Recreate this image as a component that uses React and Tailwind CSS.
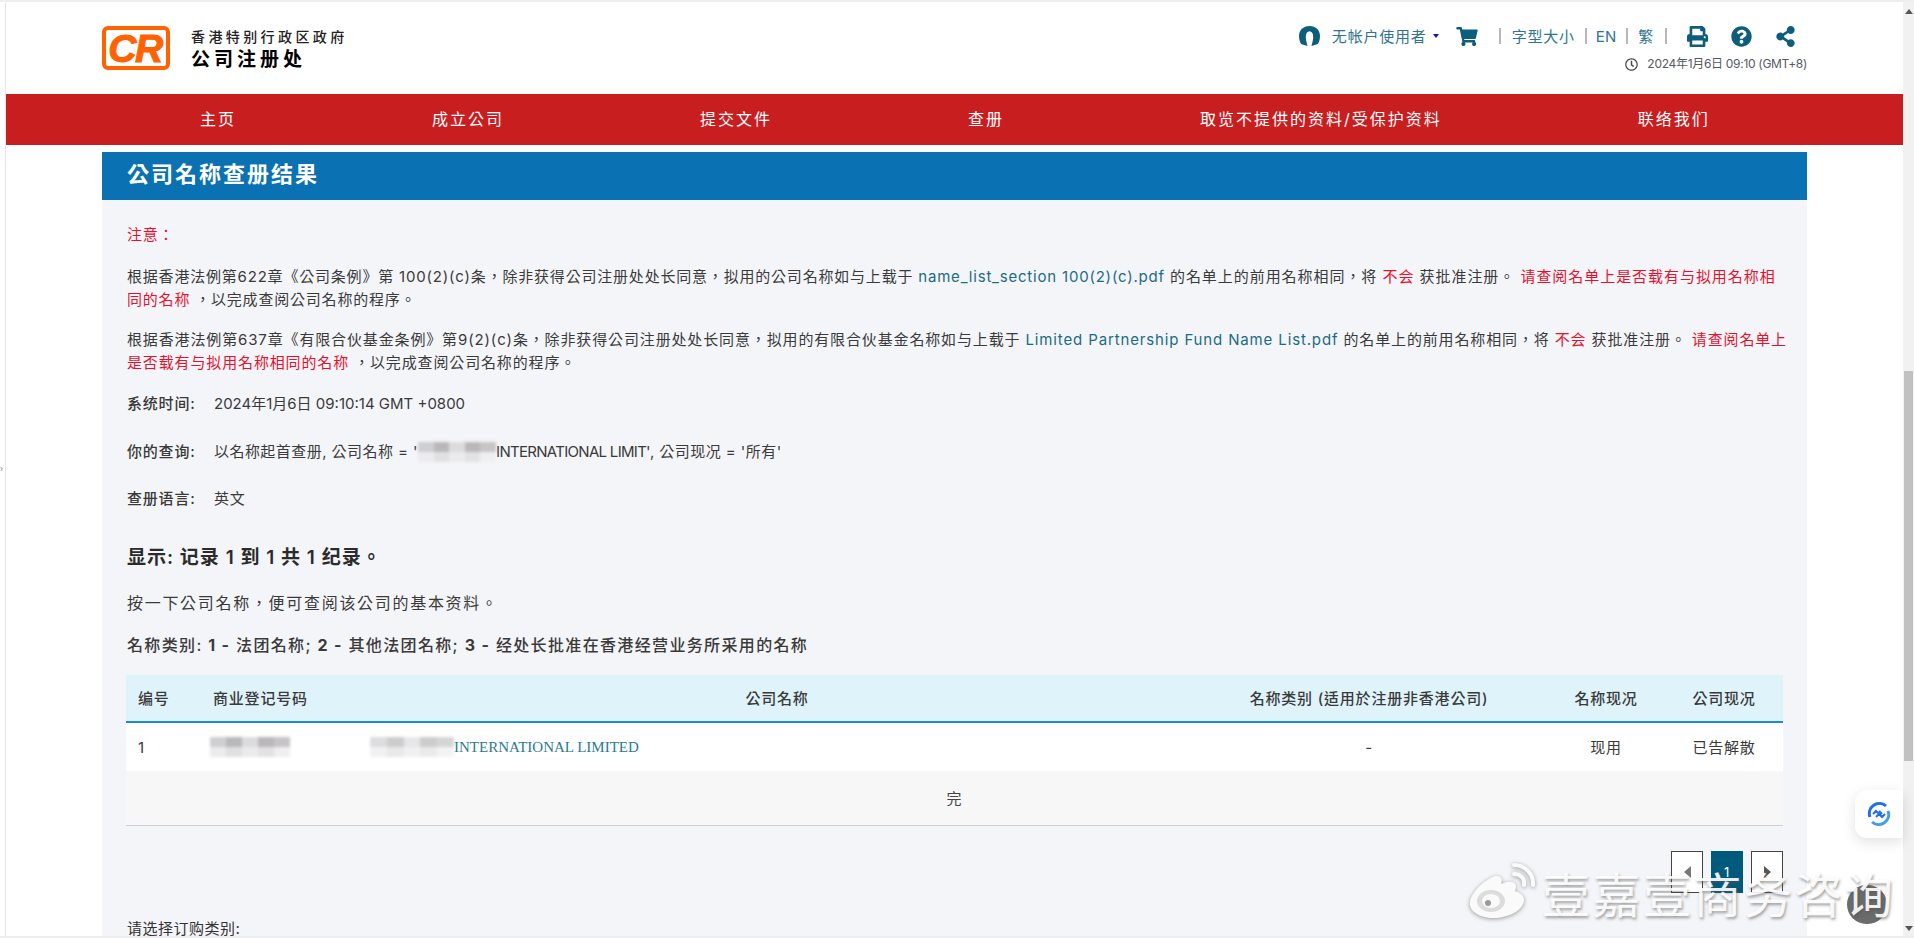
import { FaShoppingCart, FaPrint, FaQuestionCircle, FaShareAlt, FaRegClock } from "react-icons/fa";

const navItems = ["主页", "成立公司", "提交文件", "查册", "取览不提供的资料/受保护资料", "联络我们"];

function Sep({ className }) {
  return <span className={"block shrink-0 w-[2px] h-[16px] bg-[#b5b9bd] " + className} />;
}

function Mosaic({ className }) {
  return (
    <span className={"inline-flex flex-col shrink-0 overflow-hidden blur-[1.5px] " + className}>
      <span className="flex h-1/2">
        <span className="flex-1 bg-[#cfcfd1]" />
        <span className="flex-1 bg-[#b9b7b9]" />
        <span className="flex-1 bg-[#dcdcde]" />
        <span className="flex-1 bg-[#b9b7b9]" />
        <span className="flex-1 bg-[#c6c4c6]" />
      </span>
      <span className="flex h-1/2">
        <span className="flex-1 bg-[#ececee]" />
        <span className="flex-1 bg-[#e0e0e2]" />
        <span className="flex-1 bg-[#ebebed]" />
        <span className="flex-1 bg-[#e2e2e4]" />
        <span className="flex-1 bg-[#efeff0]" />
      </span>
    </span>
  );
}

function Weibo() {
  return (
    <svg viewBox="0 0 68 56" className="w-[68px] h-[56px] [filter:drop-shadow(0_1px_2px_rgba(90,90,90,0.6))]">
      <path d="M27 13c-9 3-22 14-25 25-2 9 8 17 23 17 16 0 31-8 31-18 0-6-6-8-9-9 2-5 1-8-3-9-4-1-8 1-11 2 1-3 1-6-1-7-1-1-3-1-5-1z" fill="#fafafa" />
      <ellipse cx="23" cy="38" rx="14" ry="11" fill="#dcdcdc" />
      <ellipse cx="23" cy="38" rx="9" ry="7" fill="#fafafa" />
      <circle cx="20" cy="40" r="3" fill="#9a9a9a" />
      <path d="M46 2c10 0 20 8 19 20" fill="none" stroke="#fafafa" strokeWidth="4" strokeLinecap="round" />
      <path d="M46 11c6 0 11 4 10 11" fill="none" stroke="#fafafa" strokeWidth="4" strokeLinecap="round" />
    </svg>
  );
}

export default function App() {
  return (
    <div className="relative w-[1914px] h-[938px] overflow-hidden bg-white flex font-['Inter','Noto_Sans_CJK_TC',sans-serif] text-[15px] leading-[23px] tracking-[0.8px] text-[#3a3a3a] border-t-2 border-b-2 border-[#eeeeee]">
      {/* left gutter */}
      <div className="w-[6px] shrink-0 border-r border-[#e6e6e6] flex items-center">
        <span className="text-[8px] leading-none text-[#777] mt-[-2px]">›</span>
      </div>

      <div className="w-[1897px] shrink-0 flex flex-col">
        {/* header */}
        <header className="h-[92px] shrink-0 px-[96px] flex justify-between">
          <div className="flex pt-[24px]">
            <div className="w-[68px] h-[44px] rounded-[6px] border-[4px] border-[#ff6200] flex items-center justify-center font-['Liberation_Sans',sans-serif] italic font-bold text-[39px] leading-none tracking-[-1.5px] text-[#ff6200] pr-[2px] [-webkit-text-stroke:1px_#ff6200]">
              CR
            </div>
            <div className="ml-[21px] mt-[1px] text-black font-medium font-['Noto_Sans_CJK_SC',sans-serif]">
              <div className="text-[14px] leading-[18px] tracking-[3.4px] text-[#222]">香港特别行政区政府</div>
              <div className="text-[19px] leading-[24px] tracking-[4px] mt-[1px] font-semibold">公司注册处</div>
            </div>
          </div>

          <div className="flex flex-col items-end pr-0 text-[#2f7590]">
            <div className="flex items-center h-[32px] mt-[18px] pr-[11px]">
              <svg viewBox="0 0 20 19" className="w-[21px] h-[20px] mr-[12px]">
                <path d="M10 0C4 0 0 4 0 9.500C0 13 1 15.500 2 17L8 19C8 17 6.500 15 6.500 10C6.500 7 8 5 10 5C12 5 13.500 7 13.500 10C13.500 15 12 17 12 19L18 17C19 15.500 20 13 20 9.500C20 4 16 0 10 0Z" fill="#0d5e7c" />
              </svg>
              <span>无帐户使用者</span>
              <span className="ml-[6px] w-0 h-0 border-x-[3px] border-x-transparent border-t-[4px] border-t-[#1414b8]" />
              <FaShoppingCart className="ml-[17px] w-[22px] h-[19px] text-[#0d5e7c]" />
              <Sep className="ml-[21px]" />
              <span className="ml-[11px]">字型大小</span>
              <Sep className="ml-[10px]" />
              <span className="ml-[9px] tracking-normal">EN</span>
              <Sep className="ml-[10px]" />
              <span className="ml-[10px]">繁</span>
              <Sep className="ml-[11px]" />
              <FaPrint className="ml-[20px] w-[21px] h-[21px] text-[#0d5e7c]" />
              <FaQuestionCircle className="ml-[23px] w-[21px] h-[21px] text-[#0d5e7c]" />
              <FaShareAlt className="ml-[23px] w-[21px] h-[21px] text-[#0d5e7c]" />
            </div>
            <div className="flex items-center text-[12px] leading-[18px] tracking-[-0.3px] text-[#555a60] mt-[3px]">
              <FaRegClock className="w-[13px] h-[13px] text-[#444] mr-[9px]" />
              2024年1月6日 09:10 (GMT+8)
            </div>
          </div>
        </header>

        {/* nav */}
        <nav className="h-[51px] shrink-0 bg-[#c81e20] px-[96px] flex items-center text-white text-[16px] tracking-[2px] whitespace-nowrap">
          {navItems.map((item) => (
            <span key={item} className="px-[98px]">{item}</span>
          ))}
        </nav>

        {/* content */}
        <main className="mx-[96px] mt-[7px] flex-1 min-h-0 flex flex-col">
          <h1 className="h-[48px] shrink-0 bg-[#0a72b2] pl-[25px] pb-[3px] flex items-center text-white text-[22px] font-semibold tracking-[2px]">
            公司名称查册结果
          </h1>
          <div className="flex-1 bg-[#f4f5f8] pt-[23px] px-[25px] whitespace-nowrap">
            <p className="text-[#e8112d] mb-[19px]">注意：</p>
            <p className="mb-[17px]">
              根据香港法例第622章《公司条例》第 100(2)(c)条，除非获得公司注册处处长同意，拟用的公司名称如与上载于{" "}
              <span className="text-[#1b6b86]">name_list_section 100(2)(c).pdf</span>{" "}
              <span className="tracking-[0.95px]">
                的名单上的前用名称相同，将 <span className="text-[#e8112d]">不会</span> 获批准注册。 <span className="text-[#e8112d]">请查阅名单上是否载有与拟用名称相</span>
              </span>
              <br />
              <span className="text-[#e8112d]">同的名称</span> ，以完成查阅公司名称的程序。
            </p>
            <p className="mb-[18px] tracking-[0.86px]">
              根据香港法例第637章《有限合伙基金条例》第9(2)(c)条，除非获得公司注册处处长同意，拟用的有限合伙基金名称如与上载于{" "}
              <span className="text-[#1b6b86]">Limited Partnership Fund Name List.pdf</span> 的名单上的前用名称相同，将{" "}
              <span className="text-[#e8112d]">不会</span> 获批准注册。 <span className="text-[#e8112d]">请查阅名单上</span>
              <br />
              <span className="text-[#e8112d]">是否载有与拟用名称相同的名称</span> ，以完成查阅公司名称的程序。
            </p>
            <div className="flex mb-[25px]">
              <span className="w-[87px] font-medium">系统时间:</span>
              <span className="tracking-normal">2024年1月6日 09:10:14 GMT +0800</span>
            </div>
            <div className="flex mb-[24px]">
              <span className="w-[87px] font-medium">你的查询:</span>
              <span className="flex items-center tracking-[0.45px]">
                以名称起首查册, 公司名称 = '
                <Mosaic className="w-[78px] h-[20px]" />
                <span className="tracking-[-0.7px]">INTERNATIONAL LIMIT'</span>, 公司现况 = '所有'
              </span>
            </div>
            <div className="flex mb-[34px]">
              <span className="w-[87px] font-medium">查册语言:</span>
              <span>英文</span>
            </div>
            <p className="text-[19px] leading-[28px] tracking-[1px] font-semibold text-[#2b2b2b] mb-[20px]">显示: 记录 1 到 1 共 1 纪录。</p>
            <p className="text-[16px] tracking-[1.7px] mb-[19px]">按一下公司名称，便可查阅该公司的基本资料。</p>
            <p className="text-[16px] tracking-[1.35px] font-medium mb-[18px]">
              名称类别: <b className="font-bold">1 -</b> 法团名称; <b className="font-bold">2 -</b> 其他法团名称; <b className="font-bold">3 -</b> 经处长批准在香港经营业务所采用的名称
            </p>

            <div className="-mx-[1px] grid grid-cols-[75px_145px_862px_322px_152px_101px] h-[48px] items-center bg-[#dff3fb] border-b-2 border-[#1a8cd0] font-medium">
              <span className="pl-[12px]">编号</span>
              <span className="pl-[12px]">商业登记号码</span>
              <span className="text-center">公司名称</span>
              <span className="text-center">名称类别 (适用於注册非香港公司)</span>
              <span className="text-center">名称现况</span>
              <span className="text-center pr-[17px]">公司现况</span>
            </div>
            <div className="-mx-[1px] grid grid-cols-[75px_145px_862px_322px_152px_101px] h-[48px] items-center bg-white">
              <span className="pl-[12px]">1</span>
              <span className="pl-[9px] flex"><Mosaic className="w-[80px] h-[20px]" /></span>
              <span className="pl-[24px] flex items-center">
                <Mosaic className="w-[84px] h-[20px] opacity-70" />
                <span className="font-['Liberation_Serif',serif] text-[#2a7a8f] tracking-normal">INTERNATIONAL LIMITED</span>
              </span>
              <span className="text-center">-</span>
              <span className="text-center">现用</span>
              <span className="text-center pr-[17px]">已告解散</span>
            </div>
            <div className="-mx-[1px] h-[55px] flex items-center justify-center bg-[#f7f7f8] border-b border-[#cfd0d3] text-[#444]">完</div>

            <div className="-mr-[1px] flex justify-end gap-[8px] mt-[25px] mb-[24px] text-white">
              <span className="w-[32px] h-[42px] bg-white border border-[#444] flex items-center justify-center">
                <span className="w-0 h-0 border-y-[6px] border-y-transparent border-r-[7px] border-r-[#777]" />
              </span>
              <span className="w-[32px] h-[42px] bg-[#005a7c] flex items-center justify-center text-[13px]">1</span>
              <span className="w-[32px] h-[42px] bg-white border border-[#444] flex items-center justify-center">
                <span className="w-0 h-0 border-y-[6px] border-y-transparent border-l-[7px] border-l-[#555]" />
              </span>
            </div>
            <p className="text-[15px] tracking-[0.5px] text-[#333]">请选择订购类别:</p>
          </div>
        </main>
      </div>

      {/* scrollbar */}
      <div className="w-[11px] shrink-0 bg-[#f1f1f1] flex flex-col items-center">
        <span className="mt-[7px] w-0 h-0 border-x-[4px] border-x-transparent border-b-[5px] border-b-[#555]" />
        <span className="mt-[357px] w-[9px] h-[390px] bg-[#c1c1c1]" />
        <span className="mt-auto mb-[5px] w-0 h-0 border-x-[4px] border-x-transparent border-t-[5px] border-t-[#555]" />
      </div>

      {/* floating helper button */}
      <div className="absolute left-[1855px] top-[788px] w-[48px] h-[48px] bg-white rounded-l-xl shadow-[0_4px_14px_rgba(0,0,0,0.12)] flex items-center justify-center">
        <svg viewBox="0 0 24 24" className="w-[24px] h-[24px]">
          <path d="M3 15A10 10 0 0 1 19 4" fill="none" stroke="#1f6fe8" strokeWidth="3" />
          <path d="M21 9A10 10 0 0 1 5 20" fill="none" stroke="#3f9bf0" strokeWidth="3" />
          <path d="M6 12l3-3 3 3 3 3 3-3M9 15l3-3M12 9l3 3" fill="none" stroke="#1f6fe8" strokeWidth="2" />
        </svg>
      </div>

      {/* watermark */}
      <div className="absolute left-[1847px] top-[883px] w-[40px] h-[39px] rounded-full bg-[#6b6b6b]" />
      <div className="absolute left-[1468px] top-[861px]"><Weibo /></div>
      <div className="absolute left-[1542px] top-[860px] text-[48px] leading-[60px] tracking-[2.5px] font-['Noto_Sans_CJK_SC',sans-serif] text-white/90 whitespace-nowrap [text-shadow:1px_2px_3px_rgba(80,80,80,0.55)]">
        壹嘉壹商务咨询
      </div>
    </div>
  );
}
